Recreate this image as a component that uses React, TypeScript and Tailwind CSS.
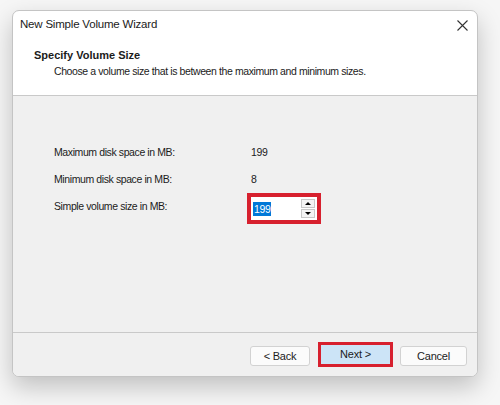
import React from 'react';

const font = { fontFamily: '"Liberation Sans", Arial, sans-serif' };

function SpinBox() {
    return (
        <div className="mt-[4px] border-[4px] border-[#d7202e] w-[74px] h-[31px] flex items-center bg-white">
            <div className="flex-1 flex items-center pl-[2px]">
                <span className="bg-[#0078d7] text-white leading-[14px] px-[1px]">199</span>
            </div>
            <div className="flex flex-col gap-[1px] mr-[2px]">
                <div className="w-[14px] h-[9px] border border-[#c8c8c8] bg-[#f4f4f4] flex items-center justify-center">
                    <div className="w-0 h-0 border-l-[3px] border-r-[3px] border-b-[3px] border-l-transparent border-r-transparent border-b-black" />
                </div>
                <div className="w-[14px] h-[9px] border border-[#c8c8c8] bg-[#f4f4f4] flex items-center justify-center">
                    <div className="w-0 h-0 border-l-[3px] border-r-[3px] border-t-[3px] border-l-transparent border-r-transparent border-t-black" />
                </div>
            </div>
        </div>
    );
}

export default function App() {
    const rows = [
        { label: 'Maximum disk space in MB:', value: '199' },
        { label: 'Minimum disk space in MB:', value: '8' },
    ];

    return (
        <div className="w-[500px] h-[405px] bg-[#f6f6f6] pl-[12px] pt-[10px] text-[#1b1b1b]" style={font}>
            <div className="w-[466px] h-[367px] flex flex-col rounded-[7px] border border-[#c4c4c4] overflow-hidden shadow-[0_10px_24px_rgba(0,0,0,0.22)] bg-white">
                {/* title bar */}
                <div className="h-[28px] flex items-center justify-between pl-[7px] pr-[9px] text-[11.5px] tracking-[-0.2px]">
                    <span>New Simple Volume Wizard</span>
                    <svg width="11" height="11" viewBox="0 0 11 11" className="stroke-[#333]">
                        <path d="M0.5 0.5 L10.5 10.5 M10.5 0.5 L0.5 10.5" strokeWidth="1.1" />
                    </svg>
                </div>

                {/* header */}
                <div className="h-[57px] border-b border-[#c9c9c9] pl-[21px] pt-[9px]">
                    <div className="font-bold text-[11px] leading-[14px]">Specify Volume Size</div>
                    <div className="pl-[20px] mt-[2px] text-[10.5px] leading-[14px] tracking-[-0.4px]">
                        Choose a volume size that is between the maximum and minimum sizes.
                    </div>
                </div>

                {/* body */}
                <div className="flex-1 bg-[#f0f0f0] pl-[41px] pt-[43px] text-[10.5px] tracking-[-0.4px]">
                    {rows.map((r) => (
                        <div key={r.label} className="h-[27px] flex items-center">
                            <span className="w-[197px]">{r.label}</span>
                            <span>{r.value}</span>
                        </div>
                    ))}
                    <div className="h-[27px] flex items-center">
                        <span className="w-[193px]">Simple volume size in MB:</span>
                        <SpinBox />
                    </div>
                </div>

                {/* footer */}
                <div className="h-[44px] border-t border-[#c9c9c9] bg-[#f0f0f0] flex items-start justify-end pr-[10px] pt-[9px] text-[11px] tracking-[-0.2px]">
                    <button className="mt-[4px] w-[60px] h-[20px] rounded-[3px] border border-[#d2d2d2] bg-[#fbfbfb]">&lt; Back</button>
                    <div className="ml-[8px] w-[75px] h-[25px] border-[3px] border-[#d7202e] bg-[#cce4f7] flex items-center justify-center">
                        Next &gt;
                    </div>
                    <button className="ml-[7px] mt-[4px] w-[67px] h-[20px] rounded-[3px] border border-[#d2d2d2] bg-[#fbfbfb]">Cancel</button>
                </div>
            </div>
        </div>
    );
}
